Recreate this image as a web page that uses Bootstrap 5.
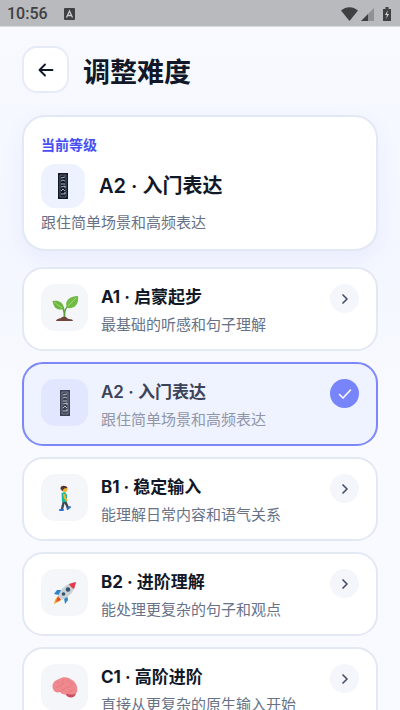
<!DOCTYPE html>
<html lang="zh-CN">
<head>
<meta charset="utf-8">
<meta name="viewport" content="width=device-width, initial-scale=1">
<title>调整难度</title>
<link rel="stylesheet" href="https://cdn.jsdelivr.net/npm/bootstrap@5.3.0/dist/css/bootstrap.min.css">
<style>
html { scrollbar-width: none; }
body { background: linear-gradient(#f8faff, #f4f6ff 250px, #f8faff 400px); color: #111827; font-family: Inter, "Noto Sans CJK SC", sans-serif; }
.status-bar { height: 27px; background: #b9babd; border-bottom: 1px solid #d9dade; color: #3f4042; font: 500 16px/26px Roboto, sans-serif; padding: 1px 5px 0 7px; }
.screen { padding: 19px 22px; }
.top-row { gap: 14px; }
.back-btn { width: 47px; height: 47px; border: 2px solid #e6ebf8; border-radius: 15px; background: #fff; color: #111827; }
.page-title { font-size: 27px; line-height: 36px; font-weight: 700; padding-top: 6px; }
.panel { background: #fff; border: 2px solid #e3e8f5; border-radius: 23px; color: #111827; }
.current { padding: 17px 17px 15px; margin-top: 22px; box-shadow: 0 8px 22px rgba(85, 100, 230, .07); }
.current-label { font-size: 14px; line-height: 22px; font-weight: 700; color: #4650f2; }
.current-row { gap: 14px; }
.current-name { font-size: 20px; line-height: 30px; font-weight: 600; }
.desc { font-size: 15px; line-height: 22px; color: #687287; }
.tile { width: 47px; height: 47px; border-radius: 14px; background: #f5f6fa; }
.tile-current { width: 44px; height: 44px; background: #eef2ff; }
.levels { gap: 11px; margin-top: 16px; }
.level { padding: 15px 17px 13px; border-radius: 21px; gap: 13px; }
.level-name { font-size: 17px; line-height: 26px; font-weight: 700; }
.level-copy { gap: 4px; }
.go { width: 29px; height: 29px; background: #f5f6fb; color: #465069; }
.level.chosen { background: #eff2ff; border-color: #7c88f8; }
.chosen .tile { background: #e2e7ff; }
.chosen .level-name { font-weight: 600; color: #3c4257; }
.chosen .desc { color: #8f96a8; }
.chosen .go { background: #7784fa; color: #fff; }
</style>
<script src="https://cdn.jsdelivr.net/npm/bootstrap@5.3.0/dist/js/bootstrap.bundle.min.js"></script>
</head>
<body>
<svg class="d-none">
  <symbol id="missing" viewBox="0 0 10 26"><path fill="#111827" d="M0 0h10v26H0z"/><path d="M2 2h6v22H2z" fill="none" stroke="#8b91a0" stroke-width=".6"/><path d="M3 5l4-1M3 8l2-1 2 1M3 11h4M3 14l4-1v2M3 18l2-2 2 2M3 21h4v-2" fill="none" stroke="#d7dae3" stroke-width=".8"/></symbol>
  <symbol id="chevron" viewBox="0 0 16 16"><path d="M6 4l4 4-4 4" fill="none" stroke="currentColor" stroke-width="1.7" stroke-linecap="round" stroke-linejoin="round"/></symbol>
</svg>
<div class="status-bar d-flex align-items-center justify-content-between">
  <div class="d-flex align-items-center gap-3"><span>10:56</span>
    <svg width="11" height="12" viewBox="0 0 11 12"><rect width="11" height="12" rx="1" fill="#3f4042"/><path d="M2.500 9.500L5.500 3l3 6.500M3.700 7.500h3.600" fill="none" stroke="#c9cacd" stroke-width="1.300"/></svg>
  </div>
  <svg width="54" height="16" viewBox="0 0 54 16"><g fill="#3f4042"><path d="M0 4.500C5 0 12 0 17 4.500L8.500 15z"/><path d="M20 15l7-7v7z"/><path d="M42 3h2.500V1h3v2H50v12h-8z"/></g><path d="M27 8l6-6v13h-6z" fill="#909194"/><path d="M47 4l-3 5h2l-1 4 3-5h-2z" fill="#d5d6d8"/></svg>
</div>
<main class="screen">
  <header class="top-row d-flex align-items-center">
    <button class="back-btn btn p-0 d-flex align-items-center justify-content-center" type="button" aria-label="返回">
      <svg width="18" height="18" viewBox="0 0 18 18"><path d="M15.500 9h-13M8 3.500L2.500 9 8 14.500" fill="none" stroke="currentColor" stroke-width="1.900" stroke-linecap="round" stroke-linejoin="round"/></svg>
    </button>
    <h1 class="page-title mb-0">调整难度</h1>
  </header>
  <section class="panel current">
    <div class="current-label">当前等级</div>
    <div class="current-row d-flex align-items-center my-1 pt-1">
      <div class="tile tile-current d-flex align-items-center justify-content-center"><svg width="10" height="26"><use href="#missing"/></svg></div>
      <h2 class="current-name mb-0">A2 · 入门表达</h2>
    </div>
    <div class="desc">跟住简单场景和高频表达</div>
  </section>
  <div class="levels d-flex flex-column">
    <button type="button" class="panel level d-flex align-items-start text-start">
      <span class="tile d-flex flex-shrink-0 align-items-center justify-content-center">
        <svg width="28" height="28" viewBox="0 0 28 28"><path d="M13.500 25C14 20 13 16 12 13" fill="none" stroke="#5d9c3f" stroke-width="1.800"/><path d="M13.500 19C14 15 16 12 20 9" fill="none" stroke="#5d9c3f" stroke-width="1.400"/><path d="M1.500 7c6-1 11 1 11.500 8C6 17 3 14 1.500 7z" fill="#6db63e"/><path d="M27 2c1 8-3 13-11 12C13 7 18 2 27 2z" fill="#72bc45"/><path d="M3 8l8 6M25 4l-8 8" stroke="#a4d477" stroke-width="1"/><path d="M5 27c1-3 4-2 5-3s4-2 6 0 5 0 6 3z" fill="#70453b"/></svg>
      </span>
      <span class="level-copy d-flex flex-column flex-fill"><span class="level-name">A1 · 启蒙起步</span><span class="desc">最基础的听感和句子理解</span></span>
      <span class="go rounded-circle d-flex flex-shrink-0 align-items-center justify-content-center"><svg width="16" height="16"><use href="#chevron"/></svg></span>
    </button>
    <button type="button" class="panel level chosen d-flex align-items-start text-start" aria-pressed="true">
      <span class="tile d-flex flex-shrink-0 align-items-center justify-content-center"><svg width="10" height="26" opacity=".8"><use href="#missing"/></svg></span>
      <span class="level-copy d-flex flex-column flex-fill"><span class="level-name">A2 · 入门表达</span><span class="desc">跟住简单场景和高频表达</span></span>
      <span class="go rounded-circle d-flex flex-shrink-0 align-items-center justify-content-center"><svg width="16" height="16" viewBox="0 0 16 16"><path d="M2.500 8.500l3.500 3.500 7.500-8" fill="none" stroke="currentColor" stroke-width="1.600" stroke-linecap="round" stroke-linejoin="round"/></svg></span>
    </button>
    <button type="button" class="panel level d-flex align-items-start text-start">
      <span class="tile d-flex flex-shrink-0 align-items-center justify-content-center">
        <svg width="14" height="26" viewBox="0 0 14 26"><path d="M6 16L4 24M7 16l3 7" fill="none" stroke="#404854" stroke-width="2.400"/><path d="M2 25h3M9.500 24l2.500-2" stroke="#2671cf" stroke-width="2" stroke-linecap="round"/><path d="M3.500 8l3.500-1 2 3v7H4z" fill="#16b5a6"/><path d="M6 9l1 4 2 3" fill="none" stroke="#f5b62c" stroke-width="2"/><circle cx="6.500" cy="4" r="3" fill="#f6b32e"/><path d="M2.500 4C2 0 8 0 9.500 3L6 3.500 4.500 6z" fill="#513533"/></svg>
      </span>
      <span class="level-copy d-flex flex-column flex-fill"><span class="level-name">B1 · 稳定输入</span><span class="desc">能理解日常内容和语气关系</span></span>
      <span class="go rounded-circle d-flex flex-shrink-0 align-items-center justify-content-center"><svg width="16" height="16"><use href="#chevron"/></svg></span>
    </button>
    <button type="button" class="panel level d-flex align-items-start text-start">
      <span class="tile d-flex flex-shrink-0 align-items-center justify-content-center">
        <svg width="24" height="24" viewBox="0 0 24 24"><path d="M5 15l3 4-3 2-4 2 1-4z" fill="#f5a623"/><path d="M5 15l3 4-3 1-2 1z" fill="#e54a2e"/><path d="M9 9L4 9 1 13l5 1zM14 14l1 5-3 4-1-6z" fill="#2d85c9"/><path d="M5 15C8 7 14 2 23 1c-1 9-6 14-14 18z" fill="#cbd0d4"/><path d="M16 3l7-2-2 7C19 7 17 5 16 3z" fill="#e73847"/><circle cx="15" cy="8.500" r="2.200" fill="#31536c"/><circle cx="10.500" cy="13" r="1.800" fill="#31536c"/></svg>
      </span>
      <span class="level-copy d-flex flex-column flex-fill"><span class="level-name">B2 · 进阶理解</span><span class="desc">能处理更复杂的句子和观点</span></span>
      <span class="go rounded-circle d-flex flex-shrink-0 align-items-center justify-content-center"><svg width="16" height="16"><use href="#chevron"/></svg></span>
    </button>
    <button type="button" class="panel level d-flex align-items-start text-start">
      <span class="tile d-flex flex-shrink-0 align-items-center justify-content-center">
        <svg width="26" height="22" viewBox="0 0 26 22"><path d="M13 16c2 6 10 6 11 0z" fill="#c94f5d"/><path d="M1 12C-1 7 3 3 7 2c4-3 10-2 13 1 4 2 6 7 5 12-2 3-6 3-9 2-3 1-7 0-8-2-3 1-6 0-7-3z" fill="#f0898e"/><path d="M4 11c2-4 4 0 6-3s-1-4 2-5M8 15c1-4 4-1 6-4s3 0 5-2M15 4c4 0 2 3 6 4M16 17c0-4 4-2 6-5M5 5l3 1" fill="none" stroke="#df7982" stroke-width=".8"/></svg>
      </span>
      <span class="level-copy d-flex flex-column flex-fill"><span class="level-name">C1 · 高阶进阶</span><span class="desc">直接从更复杂的原生输入开始</span></span>
      <span class="go rounded-circle d-flex flex-shrink-0 align-items-center justify-content-center"><svg width="16" height="16"><use href="#chevron"/></svg></span>
    </button>
  </div>
</main>
</body>
</html>
